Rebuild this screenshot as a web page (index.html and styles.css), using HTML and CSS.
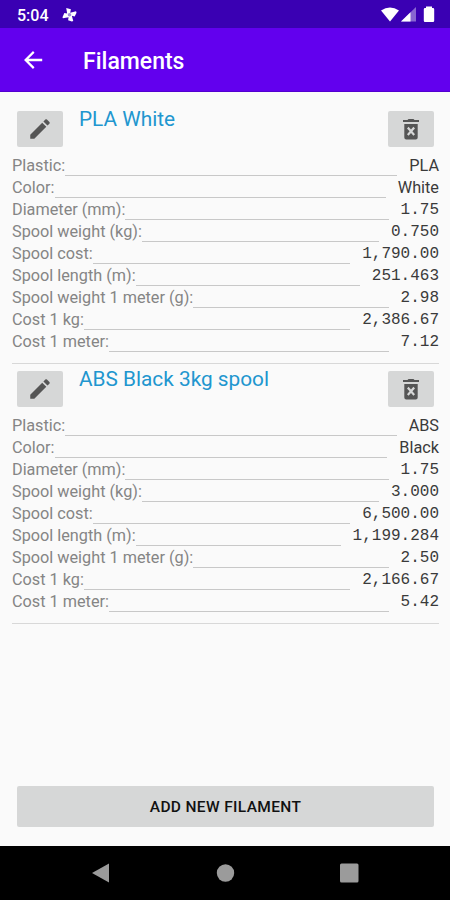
FILE: index.html
```html
<!DOCTYPE html>
<html lang="en">
<head>
<meta charset="utf-8">
<title>Filaments</title>
<link rel="stylesheet" href="styles.css">
</head>
<body>
<svg class="defs" width="0" height="0">
  <symbol id="pencil" viewBox="0 0 24 24"><path d="M3 17.250V21h3.750L17.810 9.940l-3.750-3.750L3 17.250zM20.710 7.040c.39-.39.39-1.020 0-1.410l-2.340-2.340c-.39-.39-1.020-.39-1.410 0l-1.830 1.830 3.750 3.750 1.830-1.830z"/></symbol>
  <symbol id="trash" viewBox="0 0 24 24"><path fill-rule="evenodd" d="M5.300 7h13.400v13.500q0 2-2 2H7.300q-2 0-2-2zM8 11.400l2.600 2.900L8 17.200l1.600 1.600 2.400-2.700 2.400 2.700 1.600-1.600-2.600-2.900 2.600-2.900-1.600-1.600-2.400 2.700-2.400-2.700zM15.500 3l-1-1h-5l-1 1H4v2h16V3z"/></symbol>
</svg>
<div class="screen">
  <header class="status">
    <span class="clock">5:04</span>
    <svg class="pinwheel" viewBox="0 0 16 16"><path d="M4.500 1L9.500 2.500 8.700 6 15 4.500 15.500 6 13.500 10 10.500 9.300 12 15 10.500 15.500 6.500 14 7 10.800 1 12 .5 11 2.500 6.500 5.500 7z"/><circle cx="8" cy="8.300" r="1.900" fill="#a08bdc"/></svg>
    <svg class="signals" viewBox="0 0 56 18">
      <path d="M1 4.500Q10-1.500 19 4.500L10 15.500z"/>
      <path d="M21 15.500L36 1v14.500z" opacity=".4"/><path d="M21 15.500l9.500-9.300v9.300z"/>
      <path d="M46 2V.5h6V2h1q1.200 0 1.200 1.200v11.600q0 1.200-1.200 1.200h-8q-1.200 0-1.200-1.200V3.200Q43.800 2 45 2z"/>
    </svg>
  </header>
  <div class="appbar">
    <svg class="back" viewBox="0 0 24 24"><path d="M20.500 10.900H7.830l5.590-5.590L12 3.800l-8.300 8.200 8.300 8.200 1.410-1.410L7.830 13.100h12.670z"/></svg>
    <h1>Filaments</h1>
  </div>
  <main>
    <section class="card">
      <div class="head"><button class="icon-btn"><svg><use href="#pencil"/></svg></button><h2>PLA White</h2><button class="icon-btn bin"><svg><use href="#trash"/></svg></button></div>
      <div class="row"><span>Plastic:</span><i></i><b>PLA</b></div>
      <div class="row"><span>Color:</span><i></i><b>White</b></div>
      <div class="row"><span>Diameter (mm):</span><i></i><b class="num">1.75</b></div>
      <div class="row"><span>Spool weight (kg):</span><i></i><b class="num">0.750</b></div>
      <div class="row"><span>Spool cost:</span><i></i><b class="num">1,790.00</b></div>
      <div class="row"><span>Spool length (m):</span><i></i><b class="num">251.463</b></div>
      <div class="row"><span>Spool weight 1 meter (g):</span><i></i><b class="num">2.98</b></div>
      <div class="row"><span>Cost 1 kg:</span><i></i><b class="num">2,386.67</b></div>
      <div class="row"><span>Cost 1 meter:</span><i></i><b class="num">7.12</b></div>
    </section>
    <section class="card">
      <div class="head"><button class="icon-btn"><svg><use href="#pencil"/></svg></button><h2>ABS Black 3kg spool</h2><button class="icon-btn bin"><svg><use href="#trash"/></svg></button></div>
      <div class="row"><span>Plastic:</span><i></i><b>ABS</b></div>
      <div class="row"><span>Color:</span><i></i><b>Black</b></div>
      <div class="row"><span>Diameter (mm):</span><i></i><b class="num">1.75</b></div>
      <div class="row"><span>Spool weight (kg):</span><i></i><b class="num">3.000</b></div>
      <div class="row"><span>Spool cost:</span><i></i><b class="num">6,500.00</b></div>
      <div class="row"><span>Spool length (m):</span><i></i><b class="num">1,199.284</b></div>
      <div class="row"><span>Spool weight 1 meter (g):</span><i></i><b class="num">2.50</b></div>
      <div class="row"><span>Cost 1 kg:</span><i></i><b class="num">2,166.67</b></div>
      <div class="row"><span>Cost 1 meter:</span><i></i><b class="num">5.42</b></div>
    </section>
  </main>
  <div class="footer"><button class="add">ADD NEW FILAMENT</button></div>
  <nav>
    <svg viewBox="0 0 20 20"><path d="M1 10L18 .5v19z"/></svg>
    <svg viewBox="0 0 20 20"><circle cx="10.500" cy="10" r="8.700"/></svg>
    <svg viewBox="0 0 20 20"><rect x="1" y=".5" width="18.500" height="19" rx="1.500"/></svg>
  </nav>
</div>
</body>
</html>
```

FILE: styles.css
```css
* { box-sizing: border-box; }
body { margin: 0; font-family: Roboto, "Liberation Sans", sans-serif; background: #fafafa; }
svg { display: block; fill: currentColor; }
.defs { position: absolute; }
.screen { width: 450px; height: 900px; display: flex; flex-direction: column; overflow: hidden; }
.status { height: 28px; background: #3a00b3; color: #fff; display: flex; align-items: center; padding: 1px 14px 0 17px; }
.clock { font-size: 16px; font-weight: 500; width: 45px; padding-top: 1px; }
.pinwheel { width: 15px; height: 15px; }
.signals { width: 56px; height: 18px; margin-left: auto; }
.appbar { height: 64px; background: #6200ee; color: #fff; display: flex; align-items: center; border-bottom: 1px solid #5200d0; padding: 0 20px; }
.back { width: 26px; height: 26px; }
h1 { margin: 0 0 0 37px; font-size: 23px; font-weight: 500; line-height: 28px; padding-top: 5px; }
main { flex: 1; padding: 12px 11px 0 12px; }
.card { height: 260px; border-bottom: 1px solid #d8d8d8; }
.head { display: flex; height: 51px; padding: 7px 5px 0; align-items: flex-start; }
.icon-btn { width: 46px; height: 36px; border: 0; border-radius: 2px; padding: 0; background: #d6d7d7; color: #555; display: grid; place-items: center; }
.icon-btn svg { width: 26px; height: 26px; }
.icon-btn.bin svg { width: 24px; height: 24px; }
h2 { flex: 1; margin: -2px 0 0 16px; font-size: 20.800px; line-height: 20px; font-weight: 400; color: #2196cf; }
.row { display: flex; height: 22.050px; line-height: 22px; font-size: 16.250px; color: #858585; white-space: nowrap; }
.row i { flex: 1; height: 1px; background: #c8c8c8; margin: 20px 12px 0 0; }
.row b { font-weight: 400; color: #3a3a3a; }
.row .num { font-family: "Liberation Mono", monospace; font-size: 16px; line-height: 22px; }
.footer { padding: 1px 16px 0 17px; height: 61px; }
.add { width: 417px; height: 41px; border: 0; border-radius: 2px; background: #d6d7d7; color: #111; font: 500 15.500px Roboto, sans-serif; letter-spacing: .35px; padding-top: 1px; }
nav { height: 54px; background: #000; color: #9b9b9b; display: flex; gap: 104px; justify-content: center; align-items: center; }
nav svg { width: 20px; height: 20px; }
```
